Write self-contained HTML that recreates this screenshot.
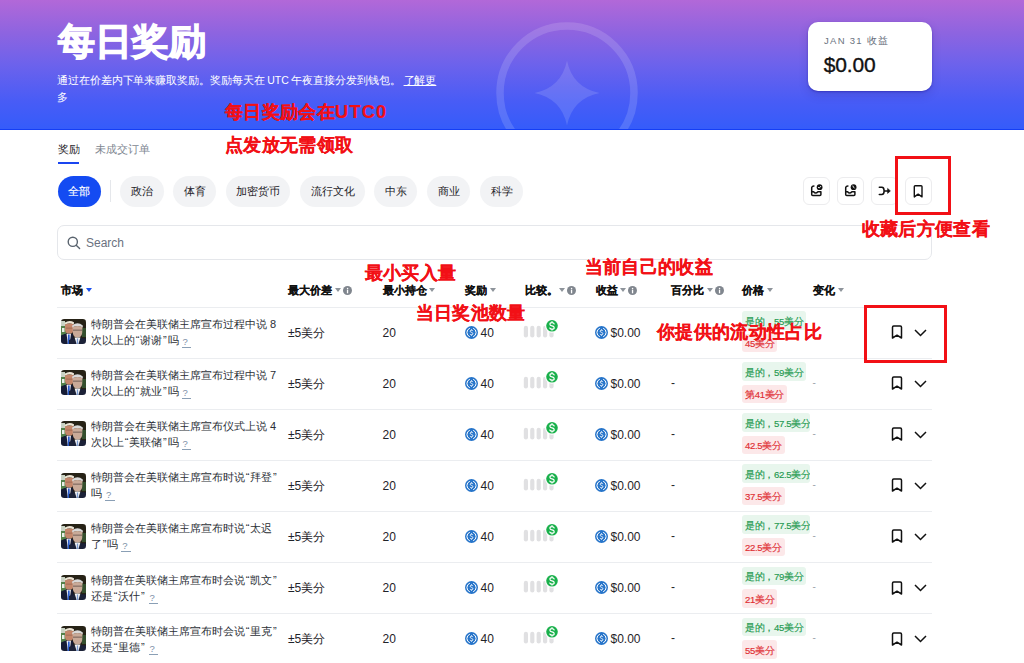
<!DOCTYPE html>
<html><head><meta charset="utf-8">
<style>
*{margin:0;padding:0;box-sizing:border-box}
html,body{width:1024px;height:663px;overflow:hidden;background:#fff;font-family:"Liberation Sans",sans-serif;color:#1f2329}
.abs{position:absolute;white-space:nowrap}
.abs>svg{display:block}
#hdr{position:absolute;left:0;top:0;width:1024px;height:130px;background:linear-gradient(180deg,rgb(178,104,216) 0%,rgb(142,100,224) 25%,rgb(108,98,236) 50%,rgb(72,92,246) 78%,rgb(52,92,250) 100%);overflow:hidden}
.title{left:57.5px;top:19.5px;font-size:37px;font-weight:bold;color:#fff;line-height:44px;-webkit-text-stroke:1.2px #fff}
.sub{left:57px;top:72px;width:390px;white-space:normal;font-size:10.5px;letter-spacing:-0.08px;line-height:17px;color:#fff}
.sub u{text-decoration:underline}
.card{left:808px;top:22px;width:124px;height:68.5px;background:#fff;border-radius:10px;box-shadow:0 1px 2px rgba(30,20,150,.45),0 4px 10px rgba(40,30,120,.18)}
.card .l{position:absolute;left:16px;top:12.7px;font-size:9.5px;letter-spacing:1.3px;color:#6b7280;white-space:nowrap}
.card .v{position:absolute;left:15.8px;top:31.4px;font-size:21px;-webkit-text-stroke:0.35px #111;letter-spacing:-0.15px;color:#111;white-space:nowrap}
.tab{font-size:11px;line-height:14px}
.pill{position:absolute;top:176px;height:31px;border-radius:16px;background:#f2f3f5;font-size:11px;line-height:31px;text-align:center;color:#1f2329}
.pill.on{background:#144bf2;color:#fff;-webkit-text-stroke:0.15px #fff;text-indent:-1px}
.ib{position:absolute;top:177px;width:27.5px;height:27.5px;border:1px solid #ececee;border-radius:6px}
.ib svg{position:absolute;left:0;top:0}
.search{left:57px;top:225px;width:875px;height:35px;border:1px solid #e5e7eb;border-radius:7px}
.th{position:absolute;top:283px;font-size:11px;font-weight:bold;line-height:14px;white-space:nowrap;color:#111;-webkit-text-stroke:0.15px #111}
.tri{display:inline-block;width:0;height:0;border-left:3px solid transparent;border-right:3px solid transparent;border-top:4.5px solid #8e949b;vertical-align:middle;margin-left:2.5px;position:relative;top:-1px}
.info{display:inline-block;vertical-align:middle;margin-left:2px;position:relative;top:-1px}
.hline{position:absolute;left:57px;width:875px;height:1px;background:#ebedf0}
.row{position:absolute;left:0;width:1024px;height:51px}
.ttl{position:absolute;left:91px;font-size:11px;line-height:16px;color:#2b2f36;white-space:nowrap}
.q{display:inline-block;color:#7b8fa6;font-size:9.5px;line-height:10px;width:9.5px;text-align:left;border-bottom:1px solid #8a9fb5;margin-left:3px;padding-left:1px;position:relative;top:1px}
.lq{letter-spacing:0.8px;margin-left:0.8px}
.cell{position:absolute;font-size:12px;white-space:nowrap;color:#1f2329;line-height:14px}
.badge{position:absolute;left:742px;height:18.5px;border-radius:3px;font-size:9.6px;letter-spacing:-0.35px;line-height:17px;padding:1.5px 3px 0 3px;white-space:nowrap;overflow:hidden;max-width:67.5px}
.dash2{color:#9ea4ab!important;font-size:10px!important}
.g{background:#e8f6ed;color:#23994f;-webkit-text-stroke:0.15px #23994f}
.r{background:#fce8e9;color:#e02d33;-webkit-text-stroke:0.15px #e02d33}
.red{position:absolute;font-size:18.2px;letter-spacing:0.35px;font-weight:bold;color:#f21016;white-space:nowrap;line-height:22px;-webkit-text-stroke:0.15px #f21016}
.rbox{position:absolute;border:3px solid #f21016}
</style></head><body>
<div id="hdr">
  <svg class="abs" style="left:489.5px;top:16px" width="154" height="154" viewBox="0 0 154 154">
    <circle cx="77" cy="77" r="67" fill="none" stroke="rgba(255,255,255,0.14)" stroke-width="7.5"/>
    <path d="M77 44.5 Q82.5 71.5 109.5 77 Q82.5 82.5 77 109.5 Q71.5 82.5 44.5 77 Q71.5 71.5 77 44.5 Z" fill="rgba(255,255,255,0.13)"/>
  </svg>
  <div class="abs title">每日奖励</div>
  <div class="abs sub">通过在价差内下单来赚取奖励。奖励每天在 UTC 午夜直接分发到钱包。 <u>了解更</u>多</div>
  <div class="abs card"><div class="l">JAN 31 收益</div><div class="v">$0.00</div></div>
<div class="abs" style="left:0;top:129px;width:1024px;height:1px;background:rgb(20,62,246)"></div>
</div>

<div class="abs tab" style="left:58px;top:142px;color:#1f2329">奖励</div>
<div class="abs" style="left:58px;top:162px;width:21px;height:2px;background:#1a45f0"></div>
<div class="abs tab" style="left:95px;top:142px;color:#7d8590">未成交订单</div>

<div class="pill on" style="left:58px;width:43px">全部</div>
<div class="abs" style="left:110px;top:180px;width:1px;height:22px;background:#e5e7eb"></div>
<div class="pill" style="left:120px;width:44px">政治</div>
<div class="pill" style="left:173px;width:43px">体育</div>
<div class="pill" style="left:226px;width:64px">加密货币</div>
<div class="pill" style="left:300px;width:65px">流行文化</div>
<div class="pill" style="left:374px;width:43px">中东</div>
<div class="pill" style="left:427px;width:43px">商业</div>
<div class="pill" style="left:480px;width:43px">科学</div>

<div class="ib" style="left:802.5px"><svg width="27.5" height="27.5" viewBox="0 0 27.5 27.5" style="left:-1.7px;top:-1px"><path d="M11.9 9.1 Q10.2 9.1 9.8 10.2 Q9.7 10.6 9.7 11.2 V17.4 Q9.7 18.4 10.7 18.4 H17.9 Q18.9 18.4 18.9 17.4 V14.8 M9.7 14.8 H11.6 Q13.6 17.4 15.9 14.8 H18.9" fill="none" stroke="#111" stroke-width="1.5" stroke-linecap="round" stroke-linejoin="round"/><circle cx="17.6" cy="10.2" r="2.9" fill="#111"/><path d="M16.3 10.3 L17.2 11.1 L18.8 9.3" fill="none" stroke="#fff" stroke-width="0.9" stroke-linecap="round" stroke-linejoin="round"/></svg></div>
<div class="ib" style="left:836.5px"><svg width="27.5" height="27.5" viewBox="0 0 27.5 27.5" style="left:-1.7px;top:-1px"><path d="M11.9 9.1 Q10.2 9.1 9.8 10.2 Q9.7 10.6 9.7 11.2 V17.4 Q9.7 18.4 10.7 18.4 H17.9 Q18.9 18.4 18.9 17.4 V14.8 M9.7 14.8 H11.6 Q13.6 17.4 15.9 14.8 H18.9" fill="none" stroke="#111" stroke-width="1.5" stroke-linecap="round" stroke-linejoin="round"/><circle cx="17.6" cy="10.2" r="2.9" fill="#111"/><path d="M16.9 9.0 Q17.2 10.3 18.3 11.1" fill="none" stroke="#fff" stroke-width="0.9" stroke-linecap="round"/></svg></div>
<div class="ib" style="left:870.5px"><svg width="27.5" height="27.5" viewBox="0 0 27.5 27.5" style="left:-1.7px;top:-1px"><path d="M9.3 10.3 H11.8 Q14.1 10.3 14.1 13.9 Q14.1 17.5 11.8 17.5 H9.3 M14.1 13.9 H18.2" fill="none" stroke="#111" stroke-width="1.5" stroke-linecap="round"/><path d="M17.6 11.4 L20.4 13.9 L17.6 16.4 Z" fill="#111" stroke="#111" stroke-width="0.6" stroke-linejoin="round"/></svg></div>
<div class="ib" style="left:904.5px"><svg width="27.5" height="27.5" viewBox="0 0 27.5 27.5" style="left:-1.7px;top:-1px"><path d="M10.3 19.9 V9.6 Q10.3 8.7 11.2 8.7 H17.1 Q18 8.7 18 9.6 V19.9 L14.15 17.1 Z" fill="none" stroke="#111" stroke-width="1.4" stroke-linejoin="round"/></svg></div>

<div class="abs search">
  <svg class="abs" style="left:9px;top:10px" width="14" height="14" viewBox="0 0 14 14"><circle cx="5.8" cy="5.8" r="4.6" fill="none" stroke="#59636e" stroke-width="1.4"/><path d="M9.2 9.2 L12.6 12.6" stroke="#59636e" stroke-width="1.4" stroke-linecap="round"/></svg>
  <div class="abs" style="left:28px;top:10px;font-size:12px;color:#6b7280;line-height:14px">Search</div>
</div>

<div class="th" style="left:61px">市场<span class="tri" style="border-top-color:#1a50f0"></span></div>
<div class="th" style="left:288px">最大价差<span class="tri"></span><svg class="info" width="9" height="9" viewBox="0 0 9 9"><circle cx="4.5" cy="4.5" r="4.5" fill="#80868e"/><rect x="3.9" y="3.7" width="1.3" height="3.6" fill="#fff"/><circle cx="4.55" cy="2.45" r="0.75" fill="#fff"/></svg></div>
<div class="th" style="left:382.5px">最小持仓<span class="tri"></span></div>
<div class="th" style="left:465px">奖励<span class="tri"></span></div>
<div class="th" style="left:524.5px">比较。<span class="tri" style="margin-left:1.5px"></span><svg class="info" width="9" height="9" viewBox="0 0 9 9"><circle cx="4.5" cy="4.5" r="4.5" fill="#80868e"/><rect x="3.9" y="3.7" width="1.3" height="3.6" fill="#fff"/><circle cx="4.55" cy="2.45" r="0.75" fill="#fff"/></svg></div>
<div class="th" style="left:595.5px">收益<span class="tri"></span><svg class="info" width="9" height="9" viewBox="0 0 9 9"><circle cx="4.5" cy="4.5" r="4.5" fill="#80868e"/><rect x="3.9" y="3.7" width="1.3" height="3.6" fill="#fff"/><circle cx="4.55" cy="2.45" r="0.75" fill="#fff"/></svg></div>
<div class="th" style="left:671px">百分比<span class="tri"></span><svg class="info" width="9" height="9" viewBox="0 0 9 9"><circle cx="4.5" cy="4.5" r="4.5" fill="#80868e"/><rect x="3.9" y="3.7" width="1.3" height="3.6" fill="#fff"/><circle cx="4.55" cy="2.45" r="0.75" fill="#fff"/></svg></div>
<div class="th" style="left:742px">价格<span class="tri"></span></div>
<div class="th" style="left:813px">变化<span class="tri"></span></div>

<div id="rows">
<div class="hline" style="top:306.5px"></div>
<div class="abs" style="left:61px;top:319.2px"><svg width="25" height="25" viewBox="0 0 25 25"><defs><clipPath id="cp0"><rect width="25" height="25" rx="3.2"/></clipPath><filter id="bl0" x="-10%" y="-10%" width="120%" height="120%"><feGaussianBlur stdDeviation="0.45"/></filter></defs><g clip-path="url(#cp0)"><g filter="url(#bl0)"><rect width="25" height="25" fill="#262118"/><rect x="0" y="3" width="5" height="15" fill="#52804a"/><rect x="0" y="2" width="4" height="5" fill="#c9d2c4"/><rect x="1" y="9" width="2.5" height="4" fill="#e9efe6"/><rect x="21" y="9" width="4" height="9" fill="#35502f"/><path d="M3.5 4 Q8 0.5 13 3.2 L12.8 5.5 Q8 3.5 4 5.8Z" fill="#ece4d4"/><path d="M4 5.5 Q8 3.8 12.6 5.2 L12.4 11.5 Q11.5 15 8 15 Q4.6 15 4 11Z" fill="#c4866a"/><path d="M4.8 8.6 H11.6 L11.6 9.6 H4.8Z" fill="#8a5a48" opacity="0.6"/><path d="M0 16.5 Q5 13.5 12 15 L13 25 L0 25Z" fill="#161c36"/><path d="M5.5 14.8 L10 14.8 L8.6 25 L6.8 25Z" fill="#eef0f4"/><path d="M7 15.6 L8.6 15.6 L9 25 L6.6 25Z" fill="#2b5ccc"/><path d="M11.2 6.5 Q16.5 2.2 21.8 6.5 L21.8 8.6 Q16.5 5.5 11.2 8.6Z" fill="#d9d9d9"/><path d="M11.6 8 Q16.5 6 21.4 8 L21.2 14 Q20.5 18.6 16.5 18.6 Q12.5 18.6 11.8 14Z" fill="#c9aa98"/><path d="M12 10.6 H21 V11.7 H12Z" fill="#5a4a44" opacity="0.7"/><path d="M8 21 Q15 17.8 25 19.5 L25 25 L8 25Z" fill="#1a2038"/><path d="M13.6 18.5 L19.4 18.5 L17.4 25 L15.6 25Z" fill="#f4f4f4"/><path d="M15.9 19.6 L17.1 19.6 L17.3 25 L15.7 25Z" fill="#7a9ad0"/></g></g></svg></div>
<div class="ttl" style="top:316.1px">特朗普会在美联储主席宣布过程中说 8<br>次以上的<span class="lq">“</span>谢谢<span class="lq">”</span>吗<span class="q">?</span></div>
<div class="cell" style="left:288px;top:325.9px">±5美分</div>
<div class="cell" style="left:382.5px;top:325.9px">20</div>
<div class="abs" style="left:465px;top:325.9px"><svg width="13" height="13" viewBox="0 0 26 26"><circle cx="13" cy="13" r="13" fill="#2775ca"/><path d="M9.6 4.6 A9 9 0 0 0 9.6 21.4 M16.4 4.6 A9 9 0 0 1 16.4 21.4" fill="none" stroke="#fff" stroke-width="2"/><path d="M15.6 10.2 Q15.2 8.4 13 8.4 Q10.4 8.4 10.4 10.4 Q10.4 12.2 13 12.8 Q15.8 13.4 15.8 15.4 Q15.8 17.6 13 17.6 Q10.6 17.6 10.2 15.8 M13 6.6 V8.4 M13 17.6 V19.4" fill="none" stroke="#fff" stroke-width="1.7"/></svg></div>
<div class="cell" style="left:480.5px;top:325.9px">40</div>
<div class="abs" style="left:523px;top:319.6px"><svg width="36" height="18" viewBox="0 0 36 18"><rect x="0.8" y="5.8" width="4.2" height="11.7" rx="2.1" fill="#e0e0e2"/><rect x="7.2" y="5.8" width="4.2" height="11.7" rx="2.1" fill="#e0e0e2"/><rect x="13.6" y="5.8" width="4.2" height="11.7" rx="2.1" fill="#e0e0e2"/><rect x="20.0" y="5.8" width="4.2" height="11.7" rx="2.1" fill="#e0e0e2"/><rect x="26.4" y="5.8" width="4.2" height="11.7" rx="2.1" fill="#e0e0e2"/><circle cx="29" cy="5.8" r="7" fill="#fff"/><circle cx="29" cy="5.8" r="5.8" fill="#19b04b"/><path d="M31.2 3.9 Q30.6 2.6 29 2.6 Q26.9 2.6 26.9 4.2 Q26.9 5.5 29 5.9 Q31.2 6.3 31.2 7.7 Q31.2 9.2 29 9.2 Q27.3 9.2 26.8 8 M29 1.6 V2.6 M29 9.2 V10.1" fill="none" stroke="#fff" stroke-width="1.2" stroke-linecap="round"/></svg></div>
<div class="abs" style="left:595px;top:325.9px"><svg width="13" height="13" viewBox="0 0 26 26"><circle cx="13" cy="13" r="13" fill="#2775ca"/><path d="M9.6 4.6 A9 9 0 0 0 9.6 21.4 M16.4 4.6 A9 9 0 0 1 16.4 21.4" fill="none" stroke="#fff" stroke-width="2"/><path d="M15.6 10.2 Q15.2 8.4 13 8.4 Q10.4 8.4 10.4 10.4 Q10.4 12.2 13 12.8 Q15.8 13.4 15.8 15.4 Q15.8 17.6 13 17.6 Q10.6 17.6 10.2 15.8 M13 6.6 V8.4 M13 17.6 V19.4" fill="none" stroke="#fff" stroke-width="1.7"/></svg></div>
<div class="cell" style="left:610.5px;top:325.9px">$0.00</div>
<div class="badge g" style="top:311.1px">是的，55美分</div>
<div class="badge r" style="top:333.6px">45美分</div>
<div class="cell dash2" style="left:812.5px;top:324.6px">-</div>
<div class="abs" style="left:891px;top:325.1px"><svg width="12" height="14" viewBox="0 0 12 14"><path d="M1.5 13 L1.5 2.2 Q1.5 1 2.7 1 L9.3 1 Q10.5 1 10.5 2.2 L10.5 13 L6 10.2 Z" fill="none" stroke="#111" stroke-width="1.5" stroke-linejoin="round"/></svg></div>
<div class="abs" style="left:914px;top:328.6px"><svg width="13" height="8" viewBox="0 0 13 8"><path d="M1 1 L6.5 6.5 L12 1" fill="none" stroke="#111" stroke-width="1.5"/></svg></div>
<div class="hline" style="top:357.6px"></div>
<div class="abs" style="left:61px;top:370.4px"><svg width="25" height="25" viewBox="0 0 25 25"><defs><clipPath id="cp1"><rect width="25" height="25" rx="3.2"/></clipPath><filter id="bl1" x="-10%" y="-10%" width="120%" height="120%"><feGaussianBlur stdDeviation="0.45"/></filter></defs><g clip-path="url(#cp1)"><g filter="url(#bl1)"><rect width="25" height="25" fill="#262118"/><rect x="0" y="3" width="5" height="15" fill="#52804a"/><rect x="0" y="2" width="4" height="5" fill="#c9d2c4"/><rect x="1" y="9" width="2.5" height="4" fill="#e9efe6"/><rect x="21" y="9" width="4" height="9" fill="#35502f"/><path d="M3.5 4 Q8 0.5 13 3.2 L12.8 5.5 Q8 3.5 4 5.8Z" fill="#ece4d4"/><path d="M4 5.5 Q8 3.8 12.6 5.2 L12.4 11.5 Q11.5 15 8 15 Q4.6 15 4 11Z" fill="#c4866a"/><path d="M4.8 8.6 H11.6 L11.6 9.6 H4.8Z" fill="#8a5a48" opacity="0.6"/><path d="M0 16.5 Q5 13.5 12 15 L13 25 L0 25Z" fill="#161c36"/><path d="M5.5 14.8 L10 14.8 L8.6 25 L6.8 25Z" fill="#eef0f4"/><path d="M7 15.6 L8.6 15.6 L9 25 L6.6 25Z" fill="#2b5ccc"/><path d="M11.2 6.5 Q16.5 2.2 21.8 6.5 L21.8 8.6 Q16.5 5.5 11.2 8.6Z" fill="#d9d9d9"/><path d="M11.6 8 Q16.5 6 21.4 8 L21.2 14 Q20.5 18.6 16.5 18.6 Q12.5 18.6 11.8 14Z" fill="#c9aa98"/><path d="M12 10.6 H21 V11.7 H12Z" fill="#5a4a44" opacity="0.7"/><path d="M8 21 Q15 17.8 25 19.5 L25 25 L8 25Z" fill="#1a2038"/><path d="M13.6 18.5 L19.4 18.5 L17.4 25 L15.6 25Z" fill="#f4f4f4"/><path d="M15.9 19.6 L17.1 19.6 L17.3 25 L15.7 25Z" fill="#7a9ad0"/></g></g></svg></div>
<div class="ttl" style="top:367.2px">特朗普会在美联储主席宣布过程中说 7<br>次以上的<span class="lq">“</span>就业<span class="lq">”</span>吗<span class="q">?</span></div>
<div class="cell" style="left:288px;top:377.0px">±5美分</div>
<div class="cell" style="left:382.5px;top:377.0px">20</div>
<div class="abs" style="left:465px;top:377.0px"><svg width="13" height="13" viewBox="0 0 26 26"><circle cx="13" cy="13" r="13" fill="#2775ca"/><path d="M9.6 4.6 A9 9 0 0 0 9.6 21.4 M16.4 4.6 A9 9 0 0 1 16.4 21.4" fill="none" stroke="#fff" stroke-width="2"/><path d="M15.6 10.2 Q15.2 8.4 13 8.4 Q10.4 8.4 10.4 10.4 Q10.4 12.2 13 12.8 Q15.8 13.4 15.8 15.4 Q15.8 17.6 13 17.6 Q10.6 17.6 10.2 15.8 M13 6.6 V8.4 M13 17.6 V19.4" fill="none" stroke="#fff" stroke-width="1.7"/></svg></div>
<div class="cell" style="left:480.5px;top:377.0px">40</div>
<div class="abs" style="left:523px;top:370.7px"><svg width="36" height="18" viewBox="0 0 36 18"><rect x="0.8" y="5.8" width="4.2" height="11.7" rx="2.1" fill="#e0e0e2"/><rect x="7.2" y="5.8" width="4.2" height="11.7" rx="2.1" fill="#e0e0e2"/><rect x="13.6" y="5.8" width="4.2" height="11.7" rx="2.1" fill="#e0e0e2"/><rect x="20.0" y="5.8" width="4.2" height="11.7" rx="2.1" fill="#e0e0e2"/><rect x="26.4" y="5.8" width="4.2" height="11.7" rx="2.1" fill="#e0e0e2"/><circle cx="29" cy="5.8" r="7" fill="#fff"/><circle cx="29" cy="5.8" r="5.8" fill="#19b04b"/><path d="M31.2 3.9 Q30.6 2.6 29 2.6 Q26.9 2.6 26.9 4.2 Q26.9 5.5 29 5.9 Q31.2 6.3 31.2 7.7 Q31.2 9.2 29 9.2 Q27.3 9.2 26.8 8 M29 1.6 V2.6 M29 9.2 V10.1" fill="none" stroke="#fff" stroke-width="1.2" stroke-linecap="round"/></svg></div>
<div class="abs" style="left:595px;top:377.0px"><svg width="13" height="13" viewBox="0 0 26 26"><circle cx="13" cy="13" r="13" fill="#2775ca"/><path d="M9.6 4.6 A9 9 0 0 0 9.6 21.4 M16.4 4.6 A9 9 0 0 1 16.4 21.4" fill="none" stroke="#fff" stroke-width="2"/><path d="M15.6 10.2 Q15.2 8.4 13 8.4 Q10.4 8.4 10.4 10.4 Q10.4 12.2 13 12.8 Q15.8 13.4 15.8 15.4 Q15.8 17.6 13 17.6 Q10.6 17.6 10.2 15.8 M13 6.6 V8.4 M13 17.6 V19.4" fill="none" stroke="#fff" stroke-width="1.7"/></svg></div>
<div class="cell" style="left:610.5px;top:377.0px">$0.00</div>
<div class="cell" style="left:671px;top:375.7px">-</div>
<div class="badge g" style="top:362.2px">是的，59美分</div>
<div class="badge r" style="top:384.7px">第41美分</div>
<div class="cell dash2" style="left:812.5px;top:375.7px">-</div>
<div class="abs" style="left:891px;top:376.2px"><svg width="12" height="14" viewBox="0 0 12 14"><path d="M1.5 13 L1.5 2.2 Q1.5 1 2.7 1 L9.3 1 Q10.5 1 10.5 2.2 L10.5 13 L6 10.2 Z" fill="none" stroke="#111" stroke-width="1.5" stroke-linejoin="round"/></svg></div>
<div class="abs" style="left:914px;top:379.7px"><svg width="13" height="8" viewBox="0 0 13 8"><path d="M1 1 L6.5 6.5 L12 1" fill="none" stroke="#111" stroke-width="1.5"/></svg></div>
<div class="hline" style="top:408.7px"></div>
<div class="abs" style="left:61px;top:421.4px"><svg width="25" height="25" viewBox="0 0 25 25"><defs><clipPath id="cp2"><rect width="25" height="25" rx="3.2"/></clipPath><filter id="bl2" x="-10%" y="-10%" width="120%" height="120%"><feGaussianBlur stdDeviation="0.45"/></filter></defs><g clip-path="url(#cp2)"><g filter="url(#bl2)"><rect width="25" height="25" fill="#262118"/><rect x="0" y="3" width="5" height="15" fill="#52804a"/><rect x="0" y="2" width="4" height="5" fill="#c9d2c4"/><rect x="1" y="9" width="2.5" height="4" fill="#e9efe6"/><rect x="21" y="9" width="4" height="9" fill="#35502f"/><path d="M3.5 4 Q8 0.5 13 3.2 L12.8 5.5 Q8 3.5 4 5.8Z" fill="#ece4d4"/><path d="M4 5.5 Q8 3.8 12.6 5.2 L12.4 11.5 Q11.5 15 8 15 Q4.6 15 4 11Z" fill="#c4866a"/><path d="M4.8 8.6 H11.6 L11.6 9.6 H4.8Z" fill="#8a5a48" opacity="0.6"/><path d="M0 16.5 Q5 13.5 12 15 L13 25 L0 25Z" fill="#161c36"/><path d="M5.5 14.8 L10 14.8 L8.6 25 L6.8 25Z" fill="#eef0f4"/><path d="M7 15.6 L8.6 15.6 L9 25 L6.6 25Z" fill="#2b5ccc"/><path d="M11.2 6.5 Q16.5 2.2 21.8 6.5 L21.8 8.6 Q16.5 5.5 11.2 8.6Z" fill="#d9d9d9"/><path d="M11.6 8 Q16.5 6 21.4 8 L21.2 14 Q20.5 18.6 16.5 18.6 Q12.5 18.6 11.8 14Z" fill="#c9aa98"/><path d="M12 10.6 H21 V11.7 H12Z" fill="#5a4a44" opacity="0.7"/><path d="M8 21 Q15 17.8 25 19.5 L25 25 L8 25Z" fill="#1a2038"/><path d="M13.6 18.5 L19.4 18.5 L17.4 25 L15.6 25Z" fill="#f4f4f4"/><path d="M15.9 19.6 L17.1 19.6 L17.3 25 L15.7 25Z" fill="#7a9ad0"/></g></g></svg></div>
<div class="ttl" style="top:418.2px">特朗普会在美联储主席宣布仪式上说 4<br>次以上<span class="lq">“</span>美联储<span class="lq">”</span>吗<span class="q">?</span></div>
<div class="cell" style="left:288px;top:428.1px">±5美分</div>
<div class="cell" style="left:382.5px;top:428.1px">20</div>
<div class="abs" style="left:465px;top:428.1px"><svg width="13" height="13" viewBox="0 0 26 26"><circle cx="13" cy="13" r="13" fill="#2775ca"/><path d="M9.6 4.6 A9 9 0 0 0 9.6 21.4 M16.4 4.6 A9 9 0 0 1 16.4 21.4" fill="none" stroke="#fff" stroke-width="2"/><path d="M15.6 10.2 Q15.2 8.4 13 8.4 Q10.4 8.4 10.4 10.4 Q10.4 12.2 13 12.8 Q15.8 13.4 15.8 15.4 Q15.8 17.6 13 17.6 Q10.6 17.6 10.2 15.8 M13 6.6 V8.4 M13 17.6 V19.4" fill="none" stroke="#fff" stroke-width="1.7"/></svg></div>
<div class="cell" style="left:480.5px;top:428.1px">40</div>
<div class="abs" style="left:523px;top:421.8px"><svg width="36" height="18" viewBox="0 0 36 18"><rect x="0.8" y="5.8" width="4.2" height="11.7" rx="2.1" fill="#e0e0e2"/><rect x="7.2" y="5.8" width="4.2" height="11.7" rx="2.1" fill="#e0e0e2"/><rect x="13.6" y="5.8" width="4.2" height="11.7" rx="2.1" fill="#e0e0e2"/><rect x="20.0" y="5.8" width="4.2" height="11.7" rx="2.1" fill="#e0e0e2"/><rect x="26.4" y="5.8" width="4.2" height="11.7" rx="2.1" fill="#e0e0e2"/><circle cx="29" cy="5.8" r="7" fill="#fff"/><circle cx="29" cy="5.8" r="5.8" fill="#19b04b"/><path d="M31.2 3.9 Q30.6 2.6 29 2.6 Q26.9 2.6 26.9 4.2 Q26.9 5.5 29 5.9 Q31.2 6.3 31.2 7.7 Q31.2 9.2 29 9.2 Q27.3 9.2 26.8 8 M29 1.6 V2.6 M29 9.2 V10.1" fill="none" stroke="#fff" stroke-width="1.2" stroke-linecap="round"/></svg></div>
<div class="abs" style="left:595px;top:428.1px"><svg width="13" height="13" viewBox="0 0 26 26"><circle cx="13" cy="13" r="13" fill="#2775ca"/><path d="M9.6 4.6 A9 9 0 0 0 9.6 21.4 M16.4 4.6 A9 9 0 0 1 16.4 21.4" fill="none" stroke="#fff" stroke-width="2"/><path d="M15.6 10.2 Q15.2 8.4 13 8.4 Q10.4 8.4 10.4 10.4 Q10.4 12.2 13 12.8 Q15.8 13.4 15.8 15.4 Q15.8 17.6 13 17.6 Q10.6 17.6 10.2 15.8 M13 6.6 V8.4 M13 17.6 V19.4" fill="none" stroke="#fff" stroke-width="1.7"/></svg></div>
<div class="cell" style="left:610.5px;top:428.1px">$0.00</div>
<div class="cell" style="left:671px;top:426.8px">-</div>
<div class="badge g" style="top:413.2px">是的，57.5美分</div>
<div class="badge r" style="top:435.8px">42.5美分</div>
<div class="cell dash2" style="left:812.5px;top:426.8px">-</div>
<div class="abs" style="left:891px;top:427.2px"><svg width="12" height="14" viewBox="0 0 12 14"><path d="M1.5 13 L1.5 2.2 Q1.5 1 2.7 1 L9.3 1 Q10.5 1 10.5 2.2 L10.5 13 L6 10.2 Z" fill="none" stroke="#111" stroke-width="1.5" stroke-linejoin="round"/></svg></div>
<div class="abs" style="left:914px;top:430.8px"><svg width="13" height="8" viewBox="0 0 13 8"><path d="M1 1 L6.5 6.5 L12 1" fill="none" stroke="#111" stroke-width="1.5"/></svg></div>
<div class="hline" style="top:459.8px"></div>
<div class="abs" style="left:61px;top:472.6px"><svg width="25" height="25" viewBox="0 0 25 25"><defs><clipPath id="cp3"><rect width="25" height="25" rx="3.2"/></clipPath><filter id="bl3" x="-10%" y="-10%" width="120%" height="120%"><feGaussianBlur stdDeviation="0.45"/></filter></defs><g clip-path="url(#cp3)"><g filter="url(#bl3)"><rect width="25" height="25" fill="#262118"/><rect x="0" y="3" width="5" height="15" fill="#52804a"/><rect x="0" y="2" width="4" height="5" fill="#c9d2c4"/><rect x="1" y="9" width="2.5" height="4" fill="#e9efe6"/><rect x="21" y="9" width="4" height="9" fill="#35502f"/><path d="M3.5 4 Q8 0.5 13 3.2 L12.8 5.5 Q8 3.5 4 5.8Z" fill="#ece4d4"/><path d="M4 5.5 Q8 3.8 12.6 5.2 L12.4 11.5 Q11.5 15 8 15 Q4.6 15 4 11Z" fill="#c4866a"/><path d="M4.8 8.6 H11.6 L11.6 9.6 H4.8Z" fill="#8a5a48" opacity="0.6"/><path d="M0 16.5 Q5 13.5 12 15 L13 25 L0 25Z" fill="#161c36"/><path d="M5.5 14.8 L10 14.8 L8.6 25 L6.8 25Z" fill="#eef0f4"/><path d="M7 15.6 L8.6 15.6 L9 25 L6.6 25Z" fill="#2b5ccc"/><path d="M11.2 6.5 Q16.5 2.2 21.8 6.5 L21.8 8.6 Q16.5 5.5 11.2 8.6Z" fill="#d9d9d9"/><path d="M11.6 8 Q16.5 6 21.4 8 L21.2 14 Q20.5 18.6 16.5 18.6 Q12.5 18.6 11.8 14Z" fill="#c9aa98"/><path d="M12 10.6 H21 V11.7 H12Z" fill="#5a4a44" opacity="0.7"/><path d="M8 21 Q15 17.8 25 19.5 L25 25 L8 25Z" fill="#1a2038"/><path d="M13.6 18.5 L19.4 18.5 L17.4 25 L15.6 25Z" fill="#f4f4f4"/><path d="M15.9 19.6 L17.1 19.6 L17.3 25 L15.7 25Z" fill="#7a9ad0"/></g></g></svg></div>
<div class="ttl" style="top:469.4px">特朗普会在美联储主席宣布时说<span class="lq">“</span>拜登<span class="lq">”</span><br>吗<span class="q">?</span></div>
<div class="cell" style="left:288px;top:479.2px">±5美分</div>
<div class="cell" style="left:382.5px;top:479.2px">20</div>
<div class="abs" style="left:465px;top:479.2px"><svg width="13" height="13" viewBox="0 0 26 26"><circle cx="13" cy="13" r="13" fill="#2775ca"/><path d="M9.6 4.6 A9 9 0 0 0 9.6 21.4 M16.4 4.6 A9 9 0 0 1 16.4 21.4" fill="none" stroke="#fff" stroke-width="2"/><path d="M15.6 10.2 Q15.2 8.4 13 8.4 Q10.4 8.4 10.4 10.4 Q10.4 12.2 13 12.8 Q15.8 13.4 15.8 15.4 Q15.8 17.6 13 17.6 Q10.6 17.6 10.2 15.8 M13 6.6 V8.4 M13 17.6 V19.4" fill="none" stroke="#fff" stroke-width="1.7"/></svg></div>
<div class="cell" style="left:480.5px;top:479.2px">40</div>
<div class="abs" style="left:523px;top:472.9px"><svg width="36" height="18" viewBox="0 0 36 18"><rect x="0.8" y="5.8" width="4.2" height="11.7" rx="2.1" fill="#e0e0e2"/><rect x="7.2" y="5.8" width="4.2" height="11.7" rx="2.1" fill="#e0e0e2"/><rect x="13.6" y="5.8" width="4.2" height="11.7" rx="2.1" fill="#e0e0e2"/><rect x="20.0" y="5.8" width="4.2" height="11.7" rx="2.1" fill="#e0e0e2"/><rect x="26.4" y="5.8" width="4.2" height="11.7" rx="2.1" fill="#e0e0e2"/><circle cx="29" cy="5.8" r="7" fill="#fff"/><circle cx="29" cy="5.8" r="5.8" fill="#19b04b"/><path d="M31.2 3.9 Q30.6 2.6 29 2.6 Q26.9 2.6 26.9 4.2 Q26.9 5.5 29 5.9 Q31.2 6.3 31.2 7.7 Q31.2 9.2 29 9.2 Q27.3 9.2 26.8 8 M29 1.6 V2.6 M29 9.2 V10.1" fill="none" stroke="#fff" stroke-width="1.2" stroke-linecap="round"/></svg></div>
<div class="abs" style="left:595px;top:479.2px"><svg width="13" height="13" viewBox="0 0 26 26"><circle cx="13" cy="13" r="13" fill="#2775ca"/><path d="M9.6 4.6 A9 9 0 0 0 9.6 21.4 M16.4 4.6 A9 9 0 0 1 16.4 21.4" fill="none" stroke="#fff" stroke-width="2"/><path d="M15.6 10.2 Q15.2 8.4 13 8.4 Q10.4 8.4 10.4 10.4 Q10.4 12.2 13 12.8 Q15.8 13.4 15.8 15.4 Q15.8 17.6 13 17.6 Q10.6 17.6 10.2 15.8 M13 6.6 V8.4 M13 17.6 V19.4" fill="none" stroke="#fff" stroke-width="1.7"/></svg></div>
<div class="cell" style="left:610.5px;top:479.2px">$0.00</div>
<div class="cell" style="left:671px;top:477.9px">-</div>
<div class="badge g" style="top:464.4px">是的，62.5美分</div>
<div class="badge r" style="top:486.9px">37.5美分</div>
<div class="cell dash2" style="left:812.5px;top:477.9px">-</div>
<div class="abs" style="left:891px;top:478.4px"><svg width="12" height="14" viewBox="0 0 12 14"><path d="M1.5 13 L1.5 2.2 Q1.5 1 2.7 1 L9.3 1 Q10.5 1 10.5 2.2 L10.5 13 L6 10.2 Z" fill="none" stroke="#111" stroke-width="1.5" stroke-linejoin="round"/></svg></div>
<div class="abs" style="left:914px;top:481.9px"><svg width="13" height="8" viewBox="0 0 13 8"><path d="M1 1 L6.5 6.5 L12 1" fill="none" stroke="#111" stroke-width="1.5"/></svg></div>
<div class="hline" style="top:510.9px"></div>
<div class="abs" style="left:61px;top:523.6px"><svg width="25" height="25" viewBox="0 0 25 25"><defs><clipPath id="cp4"><rect width="25" height="25" rx="3.2"/></clipPath><filter id="bl4" x="-10%" y="-10%" width="120%" height="120%"><feGaussianBlur stdDeviation="0.45"/></filter></defs><g clip-path="url(#cp4)"><g filter="url(#bl4)"><rect width="25" height="25" fill="#262118"/><rect x="0" y="3" width="5" height="15" fill="#52804a"/><rect x="0" y="2" width="4" height="5" fill="#c9d2c4"/><rect x="1" y="9" width="2.5" height="4" fill="#e9efe6"/><rect x="21" y="9" width="4" height="9" fill="#35502f"/><path d="M3.5 4 Q8 0.5 13 3.2 L12.8 5.5 Q8 3.5 4 5.8Z" fill="#ece4d4"/><path d="M4 5.5 Q8 3.8 12.6 5.2 L12.4 11.5 Q11.5 15 8 15 Q4.6 15 4 11Z" fill="#c4866a"/><path d="M4.8 8.6 H11.6 L11.6 9.6 H4.8Z" fill="#8a5a48" opacity="0.6"/><path d="M0 16.5 Q5 13.5 12 15 L13 25 L0 25Z" fill="#161c36"/><path d="M5.5 14.8 L10 14.8 L8.6 25 L6.8 25Z" fill="#eef0f4"/><path d="M7 15.6 L8.6 15.6 L9 25 L6.6 25Z" fill="#2b5ccc"/><path d="M11.2 6.5 Q16.5 2.2 21.8 6.5 L21.8 8.6 Q16.5 5.5 11.2 8.6Z" fill="#d9d9d9"/><path d="M11.6 8 Q16.5 6 21.4 8 L21.2 14 Q20.5 18.6 16.5 18.6 Q12.5 18.6 11.8 14Z" fill="#c9aa98"/><path d="M12 10.6 H21 V11.7 H12Z" fill="#5a4a44" opacity="0.7"/><path d="M8 21 Q15 17.8 25 19.5 L25 25 L8 25Z" fill="#1a2038"/><path d="M13.6 18.5 L19.4 18.5 L17.4 25 L15.6 25Z" fill="#f4f4f4"/><path d="M15.9 19.6 L17.1 19.6 L17.3 25 L15.7 25Z" fill="#7a9ad0"/></g></g></svg></div>
<div class="ttl" style="top:520.4px">特朗普会在美联储主席宣布时说<span class="lq">“</span>太迟<br>了<span class="lq">”</span>吗<span class="q">?</span></div>
<div class="cell" style="left:288px;top:530.2px">±5美分</div>
<div class="cell" style="left:382.5px;top:530.2px">20</div>
<div class="abs" style="left:465px;top:530.2px"><svg width="13" height="13" viewBox="0 0 26 26"><circle cx="13" cy="13" r="13" fill="#2775ca"/><path d="M9.6 4.6 A9 9 0 0 0 9.6 21.4 M16.4 4.6 A9 9 0 0 1 16.4 21.4" fill="none" stroke="#fff" stroke-width="2"/><path d="M15.6 10.2 Q15.2 8.4 13 8.4 Q10.4 8.4 10.4 10.4 Q10.4 12.2 13 12.8 Q15.8 13.4 15.8 15.4 Q15.8 17.6 13 17.6 Q10.6 17.6 10.2 15.8 M13 6.6 V8.4 M13 17.6 V19.4" fill="none" stroke="#fff" stroke-width="1.7"/></svg></div>
<div class="cell" style="left:480.5px;top:530.2px">40</div>
<div class="abs" style="left:523px;top:523.9px"><svg width="36" height="18" viewBox="0 0 36 18"><rect x="0.8" y="5.8" width="4.2" height="11.7" rx="2.1" fill="#e0e0e2"/><rect x="7.2" y="5.8" width="4.2" height="11.7" rx="2.1" fill="#e0e0e2"/><rect x="13.6" y="5.8" width="4.2" height="11.7" rx="2.1" fill="#e0e0e2"/><rect x="20.0" y="5.8" width="4.2" height="11.7" rx="2.1" fill="#e0e0e2"/><rect x="26.4" y="5.8" width="4.2" height="11.7" rx="2.1" fill="#e0e0e2"/><circle cx="29" cy="5.8" r="7" fill="#fff"/><circle cx="29" cy="5.8" r="5.8" fill="#19b04b"/><path d="M31.2 3.9 Q30.6 2.6 29 2.6 Q26.9 2.6 26.9 4.2 Q26.9 5.5 29 5.9 Q31.2 6.3 31.2 7.7 Q31.2 9.2 29 9.2 Q27.3 9.2 26.8 8 M29 1.6 V2.6 M29 9.2 V10.1" fill="none" stroke="#fff" stroke-width="1.2" stroke-linecap="round"/></svg></div>
<div class="abs" style="left:595px;top:530.2px"><svg width="13" height="13" viewBox="0 0 26 26"><circle cx="13" cy="13" r="13" fill="#2775ca"/><path d="M9.6 4.6 A9 9 0 0 0 9.6 21.4 M16.4 4.6 A9 9 0 0 1 16.4 21.4" fill="none" stroke="#fff" stroke-width="2"/><path d="M15.6 10.2 Q15.2 8.4 13 8.4 Q10.4 8.4 10.4 10.4 Q10.4 12.2 13 12.8 Q15.8 13.4 15.8 15.4 Q15.8 17.6 13 17.6 Q10.6 17.6 10.2 15.8 M13 6.6 V8.4 M13 17.6 V19.4" fill="none" stroke="#fff" stroke-width="1.7"/></svg></div>
<div class="cell" style="left:610.5px;top:530.2px">$0.00</div>
<div class="cell" style="left:671px;top:528.9px">-</div>
<div class="badge g" style="top:515.4px">是的，77.5美分</div>
<div class="badge r" style="top:537.9px">22.5美分</div>
<div class="cell dash2" style="left:812.5px;top:528.9px">-</div>
<div class="abs" style="left:891px;top:529.4px"><svg width="12" height="14" viewBox="0 0 12 14"><path d="M1.5 13 L1.5 2.2 Q1.5 1 2.7 1 L9.3 1 Q10.5 1 10.5 2.2 L10.5 13 L6 10.2 Z" fill="none" stroke="#111" stroke-width="1.5" stroke-linejoin="round"/></svg></div>
<div class="abs" style="left:914px;top:532.9px"><svg width="13" height="8" viewBox="0 0 13 8"><path d="M1 1 L6.5 6.5 L12 1" fill="none" stroke="#111" stroke-width="1.5"/></svg></div>
<div class="hline" style="top:562.0px"></div>
<div class="abs" style="left:61px;top:574.8px"><svg width="25" height="25" viewBox="0 0 25 25"><defs><clipPath id="cp5"><rect width="25" height="25" rx="3.2"/></clipPath><filter id="bl5" x="-10%" y="-10%" width="120%" height="120%"><feGaussianBlur stdDeviation="0.45"/></filter></defs><g clip-path="url(#cp5)"><g filter="url(#bl5)"><rect width="25" height="25" fill="#262118"/><rect x="0" y="3" width="5" height="15" fill="#52804a"/><rect x="0" y="2" width="4" height="5" fill="#c9d2c4"/><rect x="1" y="9" width="2.5" height="4" fill="#e9efe6"/><rect x="21" y="9" width="4" height="9" fill="#35502f"/><path d="M3.5 4 Q8 0.5 13 3.2 L12.8 5.5 Q8 3.5 4 5.8Z" fill="#ece4d4"/><path d="M4 5.5 Q8 3.8 12.6 5.2 L12.4 11.5 Q11.5 15 8 15 Q4.6 15 4 11Z" fill="#c4866a"/><path d="M4.8 8.6 H11.6 L11.6 9.6 H4.8Z" fill="#8a5a48" opacity="0.6"/><path d="M0 16.5 Q5 13.5 12 15 L13 25 L0 25Z" fill="#161c36"/><path d="M5.5 14.8 L10 14.8 L8.6 25 L6.8 25Z" fill="#eef0f4"/><path d="M7 15.6 L8.6 15.6 L9 25 L6.6 25Z" fill="#2b5ccc"/><path d="M11.2 6.5 Q16.5 2.2 21.8 6.5 L21.8 8.6 Q16.5 5.5 11.2 8.6Z" fill="#d9d9d9"/><path d="M11.6 8 Q16.5 6 21.4 8 L21.2 14 Q20.5 18.6 16.5 18.6 Q12.5 18.6 11.8 14Z" fill="#c9aa98"/><path d="M12 10.6 H21 V11.7 H12Z" fill="#5a4a44" opacity="0.7"/><path d="M8 21 Q15 17.8 25 19.5 L25 25 L8 25Z" fill="#1a2038"/><path d="M13.6 18.5 L19.4 18.5 L17.4 25 L15.6 25Z" fill="#f4f4f4"/><path d="M15.9 19.6 L17.1 19.6 L17.3 25 L15.7 25Z" fill="#7a9ad0"/></g></g></svg></div>
<div class="ttl" style="top:571.5px">特朗普在美联储主席宣布时会说<span class="lq">“</span>凯文<span class="lq">”</span><br>还是<span class="lq">“</span>沃什<span class="lq">”</span><span class="q">?</span></div>
<div class="cell" style="left:288px;top:581.3px">±5美分</div>
<div class="cell" style="left:382.5px;top:581.3px">20</div>
<div class="abs" style="left:465px;top:581.3px"><svg width="13" height="13" viewBox="0 0 26 26"><circle cx="13" cy="13" r="13" fill="#2775ca"/><path d="M9.6 4.6 A9 9 0 0 0 9.6 21.4 M16.4 4.6 A9 9 0 0 1 16.4 21.4" fill="none" stroke="#fff" stroke-width="2"/><path d="M15.6 10.2 Q15.2 8.4 13 8.4 Q10.4 8.4 10.4 10.4 Q10.4 12.2 13 12.8 Q15.8 13.4 15.8 15.4 Q15.8 17.6 13 17.6 Q10.6 17.6 10.2 15.8 M13 6.6 V8.4 M13 17.6 V19.4" fill="none" stroke="#fff" stroke-width="1.7"/></svg></div>
<div class="cell" style="left:480.5px;top:581.3px">40</div>
<div class="abs" style="left:523px;top:575.0px"><svg width="36" height="18" viewBox="0 0 36 18"><rect x="0.8" y="5.8" width="4.2" height="11.7" rx="2.1" fill="#e0e0e2"/><rect x="7.2" y="5.8" width="4.2" height="11.7" rx="2.1" fill="#e0e0e2"/><rect x="13.6" y="5.8" width="4.2" height="11.7" rx="2.1" fill="#e0e0e2"/><rect x="20.0" y="5.8" width="4.2" height="11.7" rx="2.1" fill="#e0e0e2"/><rect x="26.4" y="5.8" width="4.2" height="11.7" rx="2.1" fill="#e0e0e2"/><circle cx="29" cy="5.8" r="7" fill="#fff"/><circle cx="29" cy="5.8" r="5.8" fill="#19b04b"/><path d="M31.2 3.9 Q30.6 2.6 29 2.6 Q26.9 2.6 26.9 4.2 Q26.9 5.5 29 5.9 Q31.2 6.3 31.2 7.7 Q31.2 9.2 29 9.2 Q27.3 9.2 26.8 8 M29 1.6 V2.6 M29 9.2 V10.1" fill="none" stroke="#fff" stroke-width="1.2" stroke-linecap="round"/></svg></div>
<div class="abs" style="left:595px;top:581.3px"><svg width="13" height="13" viewBox="0 0 26 26"><circle cx="13" cy="13" r="13" fill="#2775ca"/><path d="M9.6 4.6 A9 9 0 0 0 9.6 21.4 M16.4 4.6 A9 9 0 0 1 16.4 21.4" fill="none" stroke="#fff" stroke-width="2"/><path d="M15.6 10.2 Q15.2 8.4 13 8.4 Q10.4 8.4 10.4 10.4 Q10.4 12.2 13 12.8 Q15.8 13.4 15.8 15.4 Q15.8 17.6 13 17.6 Q10.6 17.6 10.2 15.8 M13 6.6 V8.4 M13 17.6 V19.4" fill="none" stroke="#fff" stroke-width="1.7"/></svg></div>
<div class="cell" style="left:610.5px;top:581.3px">$0.00</div>
<div class="cell" style="left:671px;top:580.0px">-</div>
<div class="badge g" style="top:566.5px">是的，79美分</div>
<div class="badge r" style="top:589.0px">21美分</div>
<div class="cell dash2" style="left:812.5px;top:580.0px">-</div>
<div class="abs" style="left:891px;top:580.5px"><svg width="12" height="14" viewBox="0 0 12 14"><path d="M1.5 13 L1.5 2.2 Q1.5 1 2.7 1 L9.3 1 Q10.5 1 10.5 2.2 L10.5 13 L6 10.2 Z" fill="none" stroke="#111" stroke-width="1.5" stroke-linejoin="round"/></svg></div>
<div class="abs" style="left:914px;top:584.0px"><svg width="13" height="8" viewBox="0 0 13 8"><path d="M1 1 L6.5 6.5 L12 1" fill="none" stroke="#111" stroke-width="1.5"/></svg></div>
<div class="hline" style="top:613.1px"></div>
<div class="abs" style="left:61px;top:625.9px"><svg width="25" height="25" viewBox="0 0 25 25"><defs><clipPath id="cp6"><rect width="25" height="25" rx="3.2"/></clipPath><filter id="bl6" x="-10%" y="-10%" width="120%" height="120%"><feGaussianBlur stdDeviation="0.45"/></filter></defs><g clip-path="url(#cp6)"><g filter="url(#bl6)"><rect width="25" height="25" fill="#262118"/><rect x="0" y="3" width="5" height="15" fill="#52804a"/><rect x="0" y="2" width="4" height="5" fill="#c9d2c4"/><rect x="1" y="9" width="2.5" height="4" fill="#e9efe6"/><rect x="21" y="9" width="4" height="9" fill="#35502f"/><path d="M3.5 4 Q8 0.5 13 3.2 L12.8 5.5 Q8 3.5 4 5.8Z" fill="#ece4d4"/><path d="M4 5.5 Q8 3.8 12.6 5.2 L12.4 11.5 Q11.5 15 8 15 Q4.6 15 4 11Z" fill="#c4866a"/><path d="M4.8 8.6 H11.6 L11.6 9.6 H4.8Z" fill="#8a5a48" opacity="0.6"/><path d="M0 16.5 Q5 13.5 12 15 L13 25 L0 25Z" fill="#161c36"/><path d="M5.5 14.8 L10 14.8 L8.6 25 L6.8 25Z" fill="#eef0f4"/><path d="M7 15.6 L8.6 15.6 L9 25 L6.6 25Z" fill="#2b5ccc"/><path d="M11.2 6.5 Q16.5 2.2 21.8 6.5 L21.8 8.6 Q16.5 5.5 11.2 8.6Z" fill="#d9d9d9"/><path d="M11.6 8 Q16.5 6 21.4 8 L21.2 14 Q20.5 18.6 16.5 18.6 Q12.5 18.6 11.8 14Z" fill="#c9aa98"/><path d="M12 10.6 H21 V11.7 H12Z" fill="#5a4a44" opacity="0.7"/><path d="M8 21 Q15 17.8 25 19.5 L25 25 L8 25Z" fill="#1a2038"/><path d="M13.6 18.5 L19.4 18.5 L17.4 25 L15.6 25Z" fill="#f4f4f4"/><path d="M15.9 19.6 L17.1 19.6 L17.3 25 L15.7 25Z" fill="#7a9ad0"/></g></g></svg></div>
<div class="ttl" style="top:622.6px">特朗普在美联储主席宣布时会说<span class="lq">“</span>里克<span class="lq">”</span><br>还是<span class="lq">“</span>里德<span class="lq">”</span><span class="q">?</span></div>
<div class="cell" style="left:288px;top:632.4px">±5美分</div>
<div class="cell" style="left:382.5px;top:632.4px">20</div>
<div class="abs" style="left:465px;top:632.4px"><svg width="13" height="13" viewBox="0 0 26 26"><circle cx="13" cy="13" r="13" fill="#2775ca"/><path d="M9.6 4.6 A9 9 0 0 0 9.6 21.4 M16.4 4.6 A9 9 0 0 1 16.4 21.4" fill="none" stroke="#fff" stroke-width="2"/><path d="M15.6 10.2 Q15.2 8.4 13 8.4 Q10.4 8.4 10.4 10.4 Q10.4 12.2 13 12.8 Q15.8 13.4 15.8 15.4 Q15.8 17.6 13 17.6 Q10.6 17.6 10.2 15.8 M13 6.6 V8.4 M13 17.6 V19.4" fill="none" stroke="#fff" stroke-width="1.7"/></svg></div>
<div class="cell" style="left:480.5px;top:632.4px">40</div>
<div class="abs" style="left:523px;top:626.1px"><svg width="36" height="18" viewBox="0 0 36 18"><rect x="0.8" y="5.8" width="4.2" height="11.7" rx="2.1" fill="#e0e0e2"/><rect x="7.2" y="5.8" width="4.2" height="11.7" rx="2.1" fill="#e0e0e2"/><rect x="13.6" y="5.8" width="4.2" height="11.7" rx="2.1" fill="#e0e0e2"/><rect x="20.0" y="5.8" width="4.2" height="11.7" rx="2.1" fill="#e0e0e2"/><rect x="26.4" y="5.8" width="4.2" height="11.7" rx="2.1" fill="#e0e0e2"/><circle cx="29" cy="5.8" r="7" fill="#fff"/><circle cx="29" cy="5.8" r="5.8" fill="#19b04b"/><path d="M31.2 3.9 Q30.6 2.6 29 2.6 Q26.9 2.6 26.9 4.2 Q26.9 5.5 29 5.9 Q31.2 6.3 31.2 7.7 Q31.2 9.2 29 9.2 Q27.3 9.2 26.8 8 M29 1.6 V2.6 M29 9.2 V10.1" fill="none" stroke="#fff" stroke-width="1.2" stroke-linecap="round"/></svg></div>
<div class="abs" style="left:595px;top:632.4px"><svg width="13" height="13" viewBox="0 0 26 26"><circle cx="13" cy="13" r="13" fill="#2775ca"/><path d="M9.6 4.6 A9 9 0 0 0 9.6 21.4 M16.4 4.6 A9 9 0 0 1 16.4 21.4" fill="none" stroke="#fff" stroke-width="2"/><path d="M15.6 10.2 Q15.2 8.4 13 8.4 Q10.4 8.4 10.4 10.4 Q10.4 12.2 13 12.8 Q15.8 13.4 15.8 15.4 Q15.8 17.6 13 17.6 Q10.6 17.6 10.2 15.8 M13 6.6 V8.4 M13 17.6 V19.4" fill="none" stroke="#fff" stroke-width="1.7"/></svg></div>
<div class="cell" style="left:610.5px;top:632.4px">$0.00</div>
<div class="cell" style="left:671px;top:631.1px">-</div>
<div class="badge g" style="top:617.6px">是的，45美分</div>
<div class="badge r" style="top:640.1px">55美分</div>
<div class="cell dash2" style="left:812.5px;top:631.1px">-</div>
<div class="abs" style="left:891px;top:631.6px"><svg width="12" height="14" viewBox="0 0 12 14"><path d="M1.5 13 L1.5 2.2 Q1.5 1 2.7 1 L9.3 1 Q10.5 1 10.5 2.2 L10.5 13 L6 10.2 Z" fill="none" stroke="#111" stroke-width="1.5" stroke-linejoin="round"/></svg></div>
<div class="abs" style="left:914px;top:635.1px"><svg width="13" height="8" viewBox="0 0 13 8"><path d="M1 1 L6.5 6.5 L12 1" fill="none" stroke="#111" stroke-width="1.5"/></svg></div>
<div class="hline" style="top:664.2px"></div>
</div>
<div class="red" style="left:225px;top:100.5px">每日奖励会在<span style="letter-spacing:1.2px">UTC0</span></div>
<div class="red" style="left:225px;top:134.0px">点发放无需领取</div>
<div class="rbox" style="left:895px;top:156px;width:56px;height:58.5px"></div>
<div class="red" style="left:861.5px;top:218.0px">收藏后方便查看</div>
<div class="red" style="left:364.5px;top:261.5px">最小买入量</div>
<div class="red" style="left:584.5px;top:256.0px">当前自己的收益</div>
<div class="red" style="left:415.5px;top:301.5px">当日奖池数量</div>
<div class="red" style="left:657px;top:320.5px">你提供的流动性占比</div>
<div class="rbox" style="left:864px;top:305px;width:83px;height:58px"></div>

</body></html>
